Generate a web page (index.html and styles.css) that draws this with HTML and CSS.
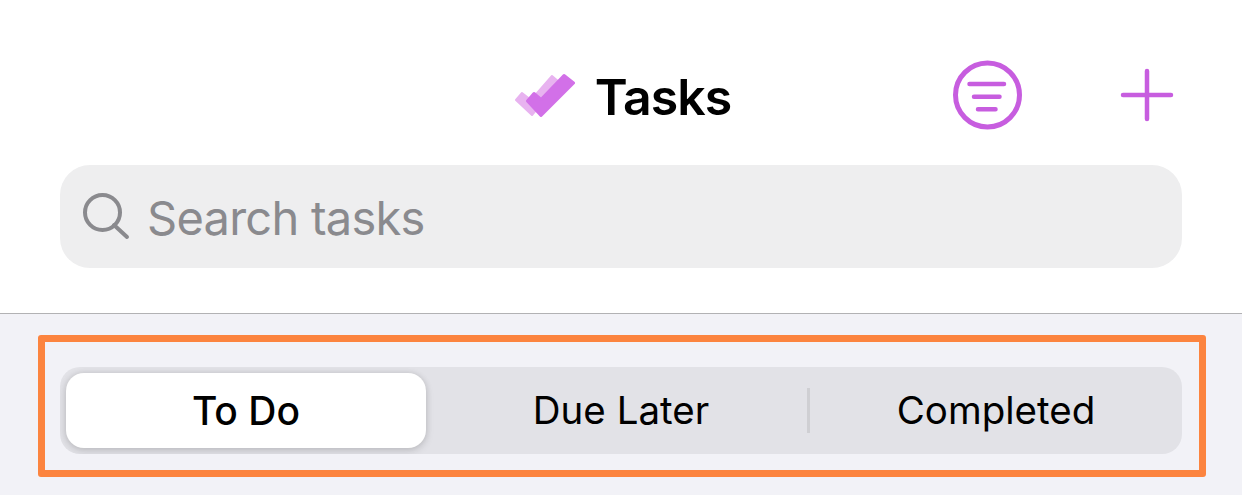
FILE: index.html
```html
<!DOCTYPE html>
<html lang="en">
<head>
    <meta charset="UTF-8">
    <meta name="viewport" content="width=device-width, initial-scale=1.0">
    <title>Tasks</title>
    <link rel="stylesheet" href="styles.css">
</head>
<body>
    <header class="top">
        <div class="title-row">
            <div class="title-spacer"></div>
            <h1 class="title">
                <svg class="logo" width="61" height="44" viewBox="0 0 61 44">
                    <polygon class="logo-back" points="1,27 7,20 16,27 37,3 44,9 17,42"/>
                    <polygon class="logo-front" points="12.5,28 19,20.5 26,26.5 49,2.5 58.5,10 26,42.5"/>
                </svg>
                <span class="title-text">Tasks</span>
            </h1>
            <div class="actions">
                <svg class="filter-icon" width="70" height="70" viewBox="0 0 70 70">
                    <circle cx="35.5" cy="35" r="32"/>
                    <path d="M17.5 24H52M22 36.7H47.5M26 49.3H43.5"/>
                </svg>
                <svg class="plus-icon" width="54" height="54" viewBox="0 0 54 54">
                    <path d="M3 27H51M27 3V51"/>
                </svg>
            </div>
        </div>
        <div class="search">
            <svg class="search-icon" width="48" height="48" viewBox="0 0 48 48">
                <circle cx="19.5" cy="19.5" r="17.5"/>
                <path d="M31 32L44 44"/>
            </svg>
            <span class="placeholder">Search tasks</span>
        </div>
    </header>
    <section class="tabs-area">
        <div class="highlight">
            <div class="segments">
                <div class="segment active">To Do</div>
                <div class="divider hidden"></div>
                <div class="segment">Due Later</div>
                <div class="divider"></div>
                <div class="segment">Completed</div>
            </div>
        </div>
    </section>
</body>
</html>
```

FILE: styles.css
```css
body {
    margin: 0;
    height: 495px;
    overflow: hidden;
    font-family: Inter, "Liberation Sans", sans-serif;
    background-color: #f2f2f7;
    color: #000;
}
.top {
    height: 313px;
    padding: 0 60px;
    background-color: #fff;
    border-bottom: 1px solid #b2b2b4;
}
.title-row {
    display: grid;
    grid-template-columns: 1fr auto 1fr;
    align-items: center;
    height: 165px;
    padding-top: 25px;
    box-sizing: border-box;
}
.title {
    display: flex;
    align-items: center;
    gap: 19px;
    margin: 0;
    padding-left: 4px;
    font-size: 50px;
    font-weight: 600;
    letter-spacing: -1px;
}
.title-text {
    padding-top: 3px;
}
.logo-back {
    fill: #e8b3f0;
    stroke: #e8b3f0;
    stroke-width: 2;
    stroke-linejoin: round;
}
.logo-front {
    fill: #d270e8;
    stroke: #d270e8;
    stroke-width: 3;
    stroke-linejoin: round;
}
.actions {
    display: flex;
    align-items: center;
    justify-content: flex-end;
    gap: 98px;
    padding-right: 8px;
}
.filter-icon circle, .filter-icon path, .plus-icon path {
    fill: none;
    stroke: #c75ddf;
    stroke-linecap: round;
}
.filter-icon circle {
    stroke-width: 5;
}
.filter-icon path, .plus-icon path {
    stroke-width: 4.5;
}
.search {
    display: flex;
    align-items: center;
    gap: 16px;
    height: 103px;
    padding-left: 23px;
    border-radius: 30px;
    background-color: #eeeeef;
}
.search-icon circle, .search-icon path {
    fill: none;
    stroke: #8a8a8e;
    stroke-width: 4;
    stroke-linecap: round;
}
.placeholder {
    padding-top: 2px;
    font-size: 47px;
    letter-spacing: -0.75px;
    color: #8a8a8e;
}
.tabs-area {
    padding: 21px 36px 0 38px;
}
.highlight {
    box-sizing: border-box;
    height: 142px;
    padding: 25px 17px 0 15px;
    border: 7px solid #fc843f;
    border-radius: 3px;
}
.segments {
    display: flex;
    align-items: center;
    height: 87px;
    padding: 0 6px;
    border-radius: 20px;
    background-color: #e2e2e7;
    overflow: hidden;
}
.segment {
    flex: 1;
    height: 75px;
    line-height: 75px;
    text-align: center;
    font-size: 38.5px;
    font-weight: 400;
    border-radius: 18px;
}
.segment.active {
    background-color: #fff;
    font-size: 39px;
    font-weight: 500;
    box-shadow: 0 3px 8px rgba(0,0,0,0.12), 0 0 6px rgba(0,0,0,0.1);
}
.divider {
    flex: none;
    width: 3px;
    height: 45px;
    margin: 0 6px;
    background-color: #cfcfd3;
}
.divider.hidden {
    background-color: transparent;
}
```
